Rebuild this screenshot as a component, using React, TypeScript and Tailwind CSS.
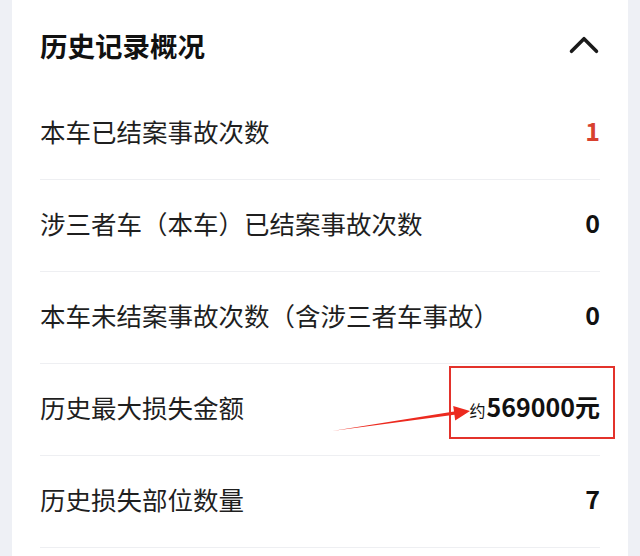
import { ChevronUp } from 'lucide-react'

const font = { fontFamily: '"Noto Sans CJK SC", "Noto Sans", sans-serif' }

type Row = { label: string; value: React.ReactNode; highlight?: boolean }

const rows: Row[] = [
  { label: '本车已结案事故次数', value: <span className="text-[#d8412f]">1</span> },
  { label: '涉三者车（本车）已结案事故次数', value: '0' },
  { label: '本车未结案事故次数（含涉三者车事故）', value: '0' },
  {
    label: '历史最大损失金额',
    highlight: true,
    value: (
      <span className="flex items-baseline">
        <span className="mr-[1px] text-[16px] font-normal">约</span>
        569000元
      </span>
    ),
  },
  { label: '历史损失部位数量', value: '7' },
]

export default function App() {
  return (
    <div className="relative h-[556px] w-[640px] overflow-hidden bg-[#eef0f5] px-[12px]" style={font}>
      <div className="h-full w-[616px] bg-white px-[28px]">
        {/* 标题 */}
        <div className="flex h-[88px] items-center justify-between pt-[4px]">
          <h2 className="text-[27.5px] font-bold text-[#111]">历史记录概况</h2>
          <ChevronUp size={50} strokeWidth={1.7} className="mr-[-9px] mt-[-2px] text-[#1a1a1a]" />
        </div>

        {/* 记录行 */}
        {rows.map((row) => (
          <div
            key={row.label}
            className="flex h-[92px] items-center justify-between border-b border-[#eeeff2] pb-[5px]"
          >
            <span className="text-[25.5px] text-[#1f1f1f]">{row.label}</span>
            <span className="relative text-[25px] font-bold text-[#111]">
              {row.value}
              {row.highlight && (
                <span className="absolute top-[-22px] right-[-15px] bottom-[-13px] left-[-20px] border-2 border-[#e3322b]" />
              )}
            </span>
          </div>
        ))}
      </div>

      {/* 标注箭头 */}
      <svg className="absolute top-0 left-0" width="640" height="556" viewBox="0 0 640 556">
        <polygon
          points="332,431 454.4,414.8 455.2,420.6 470,411 453.2,406 454,411.6"
          fill="#ec2a1f"
        />
      </svg>
    </div>
  )
}
